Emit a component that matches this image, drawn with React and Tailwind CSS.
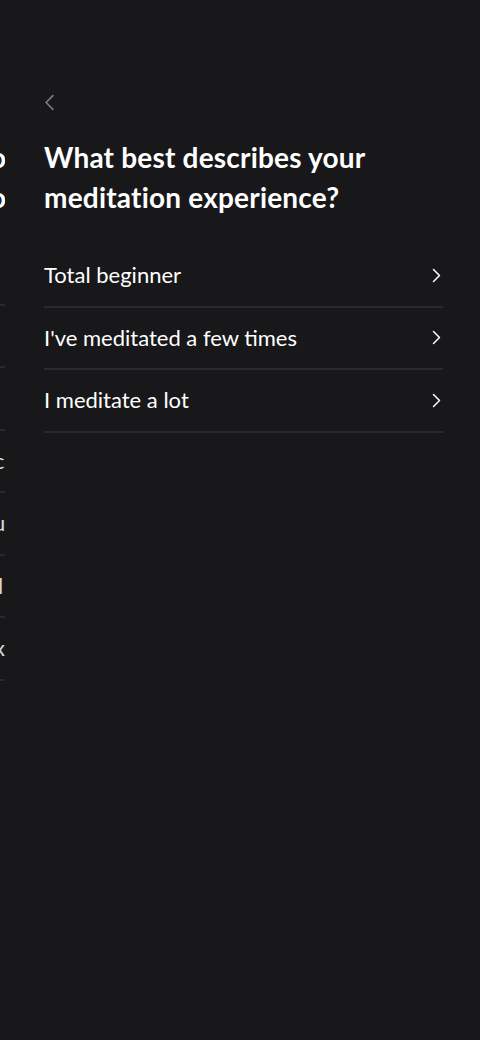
const options = ["Total beginner", "I've meditated a few times", "I meditate a lot"];

// fragments of the previous screen, still sliding out at the left edge
const prevRows = [
  { c: "", shift: "-ml-[8px]" },
  { c: "", shift: "-ml-[8px]" },
  { c: "", shift: "-ml-[8px]" },
  { c: "c", shift: "-ml-[6px]" },
  { c: "u", shift: "-ml-[7px]" },
  { c: "l", shift: "-ml-[2px]" },
  { c: "x", shift: "-ml-[6px]" },
];

function Chevron({ className }) {
  return (
    <svg viewBox="0 0 12 20" className={className} fill="none" stroke="currentColor" strokeWidth="2" strokeLinecap="round" strokeLinejoin="round">
      <path d="M2 2l8 8-8 8" />
    </svg>
  );
}

export default function App() {
  return (
    <div
      className="flex min-h-[1040px] w-[480px] overflow-hidden bg-[#18181a] text-white"
      style={{ fontFamily: "Lato, 'Noto Sans', sans-serif" }}
    >
      <div className="w-[5px] shrink-0 overflow-hidden pt-[137px]">
        <div className="flex h-[40px] items-center text-[28px] font-bold leading-none">
          <span className="-ml-[10px]">o</span>
        </div>
        <div className="flex h-[40px] items-center text-[28px] font-bold leading-none">
          <span className="-ml-[10px]">o</span>
        </div>
        <div className="h-[26px]" />
        {prevRows.map((r, i) => (
          <div key={i} className="flex h-[62.5px] items-center border-b-2 border-[#2a2a2c] text-[22px] leading-none text-[#d8d8d8]">
            <span className={r.shift}>{r.c || "\u00a0"}</span>
          </div>
        ))}
      </div>

      <div className="flex flex-1 flex-col pl-[39px] pr-[37px] pt-[93px]">
        <button className="flex h-[18px] w-[14px] items-center text-[#7c7c7e]">
          <Chevron className="h-[17px] w-[11px] rotate-180" />
        </button>
        <h1 className="mt-[26px] text-[28px] font-bold leading-[40px] tracking-[0.2px]">
          What best describes your
          <br />
          meditation experience?
        </h1>
        <div className="mt-[28px] flex flex-col">
          {options.map((o) => (
            <div key={o} className="flex h-[62.5px] items-center justify-between border-b-2 border-[#2a2a2c]">
              <span className="text-[22px] leading-none">{o}</span>
              <Chevron className="mr-[2px] h-[15px] w-[9px] text-white" />
            </div>
          ))}
        </div>
      </div>
    </div>
  );
}
